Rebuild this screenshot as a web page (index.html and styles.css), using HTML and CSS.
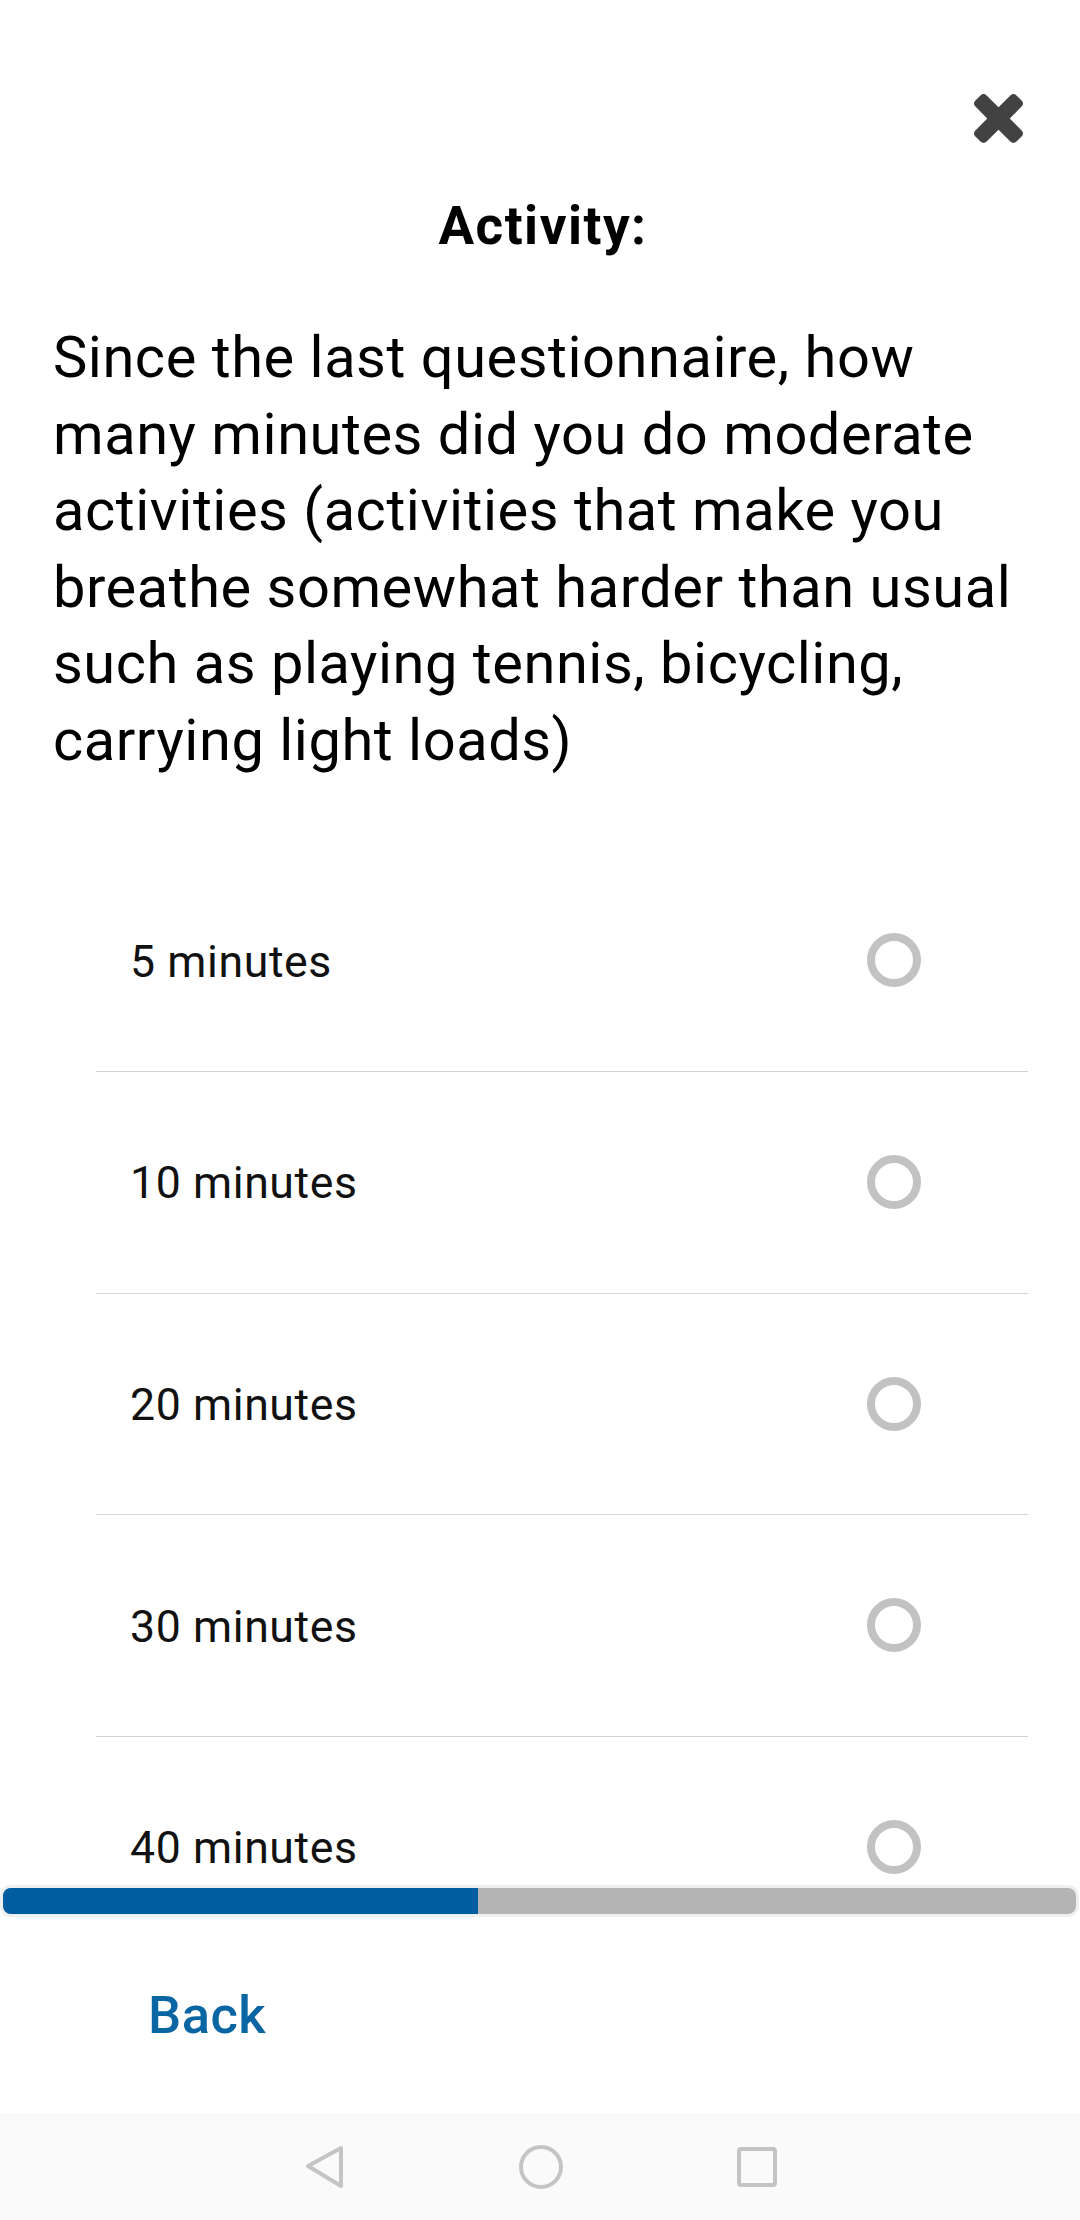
FILE: index.html
```html
<!DOCTYPE html>
<html lang="en">
<head>
<meta charset="utf-8">
<title>Activity</title>
<link rel="stylesheet" href="styles.css">
</head>
<body>
<div class="app">
  <div class="scroll">
    <div class="topbar">
      <button class="close" aria-label="Close">
        <svg viewBox="110 366 1188 1188" width="49" height="49"><path fill="#424242" d="M1298 1322q0 40-28 68l-136 136q-28 28-68 28t-68-28l-294-294-294 294q-28 28-68 28t-68-28l-136-136q-28-28-28-68t28-68l294-294-294-294q-28-28-28-68t28-68l136-136q28-28 68-28t68 28l294 294 294-294q28-28 68-28t68 28l136 136q28 28 28 68t-28 68l-294 294 294 294q28 28 28 68z"/></svg>
      </button>
    </div>
    <h1 class="title">Activity:</h1>
    <p class="question">Since the last questionnaire, how many minutes did you do moderate activities (activities that make you breathe somewhat harder than usual such as playing tennis, bicycling, carrying light loads)</p>
    <ul class="options">
      <li class="option"><span class="label">5 minutes</span><span class="radio"></span></li>
      <li class="option"><span class="label">10 minutes</span><span class="radio"></span></li>
      <li class="option"><span class="label">20 minutes</span><span class="radio"></span></li>
      <li class="option"><span class="label">30 minutes</span><span class="radio"></span></li>
      <li class="option"><span class="label">40 minutes</span><span class="radio"></span></li>
    </ul>
  </div>
  <div class="progress"><div class="track"><div class="fill" style="width:44.3%"></div></div></div>
  <div class="footer"><button class="back">Back</button></div>
  <nav class="navbar">
    <svg class="nav-icon" width="44" height="46" viewBox="0 0 44 46"><path d="M39 4 L6 22 L39 42 Z" fill="none" stroke="#c4c4c4" stroke-width="4" stroke-linejoin="round"/></svg>
    <svg class="nav-icon" width="46" height="46" viewBox="0 0 46 46"><circle cx="23" cy="23" r="20" fill="none" stroke="#c4c4c4" stroke-width="4"/></svg>
    <svg class="nav-icon" width="42" height="42" viewBox="0 0 42 42"><rect x="3" y="3" width="36" height="36" rx="2" fill="none" stroke="#c4c4c4" stroke-width="4"/></svg>
  </nav>
</div>
</body>
</html>
```

FILE: styles.css
```css
* { box-sizing: border-box; }
html, body {
  margin: 0;
  padding: 0;
  background: #ffffff;
}
body {
  width: 1080px;
  height: 2220px;
  overflow: hidden;
  font-family: Roboto, "Noto Sans", "Liberation Sans", sans-serif;
}
.app {
  display: flex;
  flex-direction: column;
  width: 1080px;
  height: 2220px;
}
.scroll {
  height: 1885px;
  flex: none;
  overflow: hidden;
}
.topbar {
  height: 196px;
  display: flex;
  justify-content: flex-end;
  align-items: flex-start;
  padding: 94px 57px 0 0;
}
.close {
  border: 0;
  padding: 0;
  margin: 0;
  background: none;
  width: 49px;
  height: 49px;
  display: block;
}
.close svg { display: block; }
.title {
  margin: 0;
  font-size: 53px;
  line-height: 61px;
  font-weight: 700;
  letter-spacing: 1.5px;
  text-align: center;
  color: #000;
  padding-left: 6px;
}
.question {
  margin: 62px 0 0 0;
  padding: 0 36px 0 53px;
  font-size: 57.75px;
  line-height: 76.6px;
  letter-spacing: 0.55px;
  color: #000;
}
.options {
  list-style: none;
  margin: 72px 52px 0 96px;
  padding: 0;
}
.option {
  height: 221.6px;
  display: flex;
  align-items: center;
  justify-content: space-between;
  padding: 0 107px 0 34px;
  border-bottom: 1px solid #d4d4d4;
}
.label {
  font-size: 44.6px;
  line-height: 52px;
  letter-spacing: 0.6px;
  color: #111;
  margin-top: 2px;
}
.radio {
  width: 54px;
  height: 54px;
  border-radius: 50%;
  border: 8px solid #c2c2c2;
  margin-top: -1px;
}
.progress {
  height: 32px;
  flex: none;
  margin: 0 1px 0 0;
  border: 3px solid #eef0f0;
  border-radius: 11px;
}
.track {
  height: 26px;
  background: #b4b4b4;
  border-radius: 8px;
  overflow: hidden;
}
.fill {
  height: 100%;
  background: #005d9f;
}
.footer {
  height: 196px;
  flex: none;
  display: flex;
  align-items: center;
  padding-left: 148px;
}
.back {
  border: 0;
  background: none;
  padding: 0;
  margin: 0;
  font-family: Roboto, "Noto Sans", sans-serif;
  font-weight: 500;
  font-size: 52.5px;
  line-height: 61px;
  letter-spacing: 0.5px;
  color: #0a66a2;
}
.navbar {
  flex: 1;
  background: #fafafa;
  display: flex;
  align-items: center;
  justify-content: center;
  gap: 172px;
}
.nav-icon { display: block; }
```
